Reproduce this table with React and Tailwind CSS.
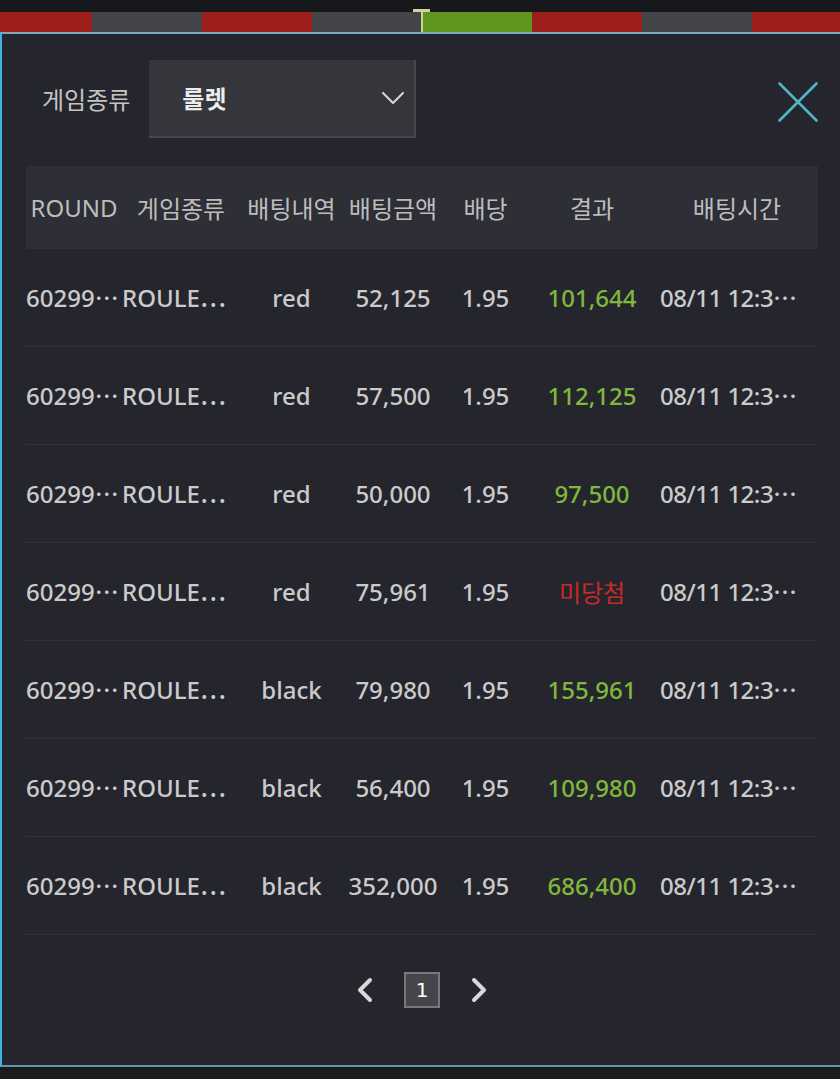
const segments = [
  "w-[92px] bg-[#9c1f1c]",
  "w-[110px] bg-[#444548]",
  "w-[110px] bg-[#9c1f1c]",
  "w-[110px] bg-[#444548]",
  "w-[110px] bg-[#5e9620]",
  "w-[110px] bg-[#9c1f1c]",
  "w-[110px] bg-[#444548]",
  "w-[88px] bg-[#9c1f1c]",
]

const rows = [
  { pick: "red", amount: "52,125", result: "101,644", win: true },
  { pick: "red", amount: "57,500", result: "112,125", win: true },
  { pick: "red", amount: "50,000", result: "97,500", win: true },
  { pick: "red", amount: "75,961", result: "미당첨", win: false },
  { pick: "black", amount: "79,980", result: "155,961", win: true },
  { pick: "black", amount: "56,400", result: "109,980", win: true },
  { pick: "black", amount: "352,000", result: "686,400", win: true },
]

const ko = "font-['Noto_Sans_CJK_KR',sans-serif]"
const cols = "grid grid-cols-[96px_118px_103px_100px_85px_128px_162px]"

function Dots() {
  return <span className={ko}>⋯</span>
}

function Chevron({ dir }) {
  return (
    <svg width="18" height="26" viewBox="0 0 18 26" fill="none" stroke="#d8d8d8" strokeWidth="4" strokeLinecap="round" strokeLinejoin="round">
      {dir === "left" ? <polyline points="14,3 4,13 14,23" /> : <polyline points="4,3 14,13 4,23" />}
    </svg>
  )
}

export default function App() {
  return (
    <div className="w-[840px] h-[1079px] bg-[#1b1c20] flex flex-col overflow-hidden font-['Noto_Sans','Noto_Sans_CJK_KR',sans-serif]">

      {/* top strip */}
      <div className="h-[12px] bg-[#17181b]" />

      {/* colour bar */}
      <div className="relative h-[20px] flex">
        {segments.map((c, i) => (
          <div key={i} className={`h-full ${c}`} />
        ))}
        <div className="absolute left-[421px] -top-[2px] w-[2px] h-[22px] bg-[#cdd49a]" />
        <div className="absolute left-[413px] -top-[3px] w-[17px] h-[3px] bg-[#cdd49a]" />
      </div>

      {/* panel */}
      <div className="h-[1035px] bg-[#25262d] border-l-2 border-t-2 border-b-2 border-l-[#3fb2e0] border-t-[#7fa9bb] border-b-[#5f9aa6] flex flex-col">

        <div className="flex items-start pt-[26px] pl-[40px] pr-[22px]">
          <div className="flex items-center h-[78px]">
            <span className={`text-[24px] text-[#c4c4c4] ${ko}`}>게임종류</span>
          </div>
          <div className="ml-[19px] w-[267px] h-[78px] bg-[#35363c] border-r-2 border-b-2 border-[#46474c] flex items-center pl-[33px] pr-[10px]">
            <span className={`text-[24px] font-bold text-[#ececec] ${ko}`}>룰렛</span>
            <svg className="ml-auto" width="22" height="12" viewBox="0 0 22 12" fill="none" stroke="#d6d6d6" strokeWidth="2" strokeLinecap="round" strokeLinejoin="round">
              <polyline points="1,1 11,11 21,1" />
            </svg>
          </div>
          <svg className="ml-auto mt-[22px]" width="40" height="40" viewBox="0 0 40 40" fill="none" stroke="#4fb6c6" strokeWidth="2.6" strokeLinecap="round">
            <line x1="1.5" y1="1.5" x2="38.5" y2="38.5" />
            <line x1="38.5" y1="1.5" x2="1.5" y2="38.5" />
          </svg>
        </div>

        {/* table */}
        <div className="ml-[24px] mr-[22px] mt-[28px]">
          <div className={`${cols} h-[83px] bg-[#2d2e36] items-center text-center text-[24px] text-[#bdbdbd]`}>
            <span>ROUND</span>
            <span className={ko}>게임종류</span>
            <span className={ko}>배팅내역</span>
            <span className={ko}>배팅금액</span>
            <span className={ko}>배당</span>
            <span className={ko}>결과</span>
            <span className={ko}>배팅시간</span>
          </div>
          {rows.map((r, i) => (
            <div key={i} className={`${cols} h-[98px] items-center text-center text-[24px] font-medium text-[#cbcbcb] border-b border-[#30313a] whitespace-nowrap`}>
              <span className="text-left">60299<Dots /></span>
              <span className="text-left">ROULE<Dots /></span>
              <span>{r.pick}</span>
              <span>{r.amount}</span>
              <span>1.95</span>
              {r.win ? (
                <span className="text-[#7fb83c]">{r.result}</span>
              ) : (
                <span className={`text-[#c62a2a] font-normal ${ko}`}>{r.result}</span>
              )}
              <span className="text-left pl-[4px] tracking-[-0.5px]">08/11 12:3<Dots /></span>
            </div>
          ))}
        </div>

        {/* pagination */}
        <div className="mt-[37px] flex items-center justify-center gap-[30px] pl-[2px]">
          <Chevron dir="left" />
          <div className="w-[36px] h-[36px] bg-[#45464b] border-2 border-[#77787c] flex items-center justify-center text-[20px] text-white font-['DejaVu_Sans',sans-serif]">1</div>
          <Chevron dir="right" />
        </div>
      </div>
    </div>
  )
}
